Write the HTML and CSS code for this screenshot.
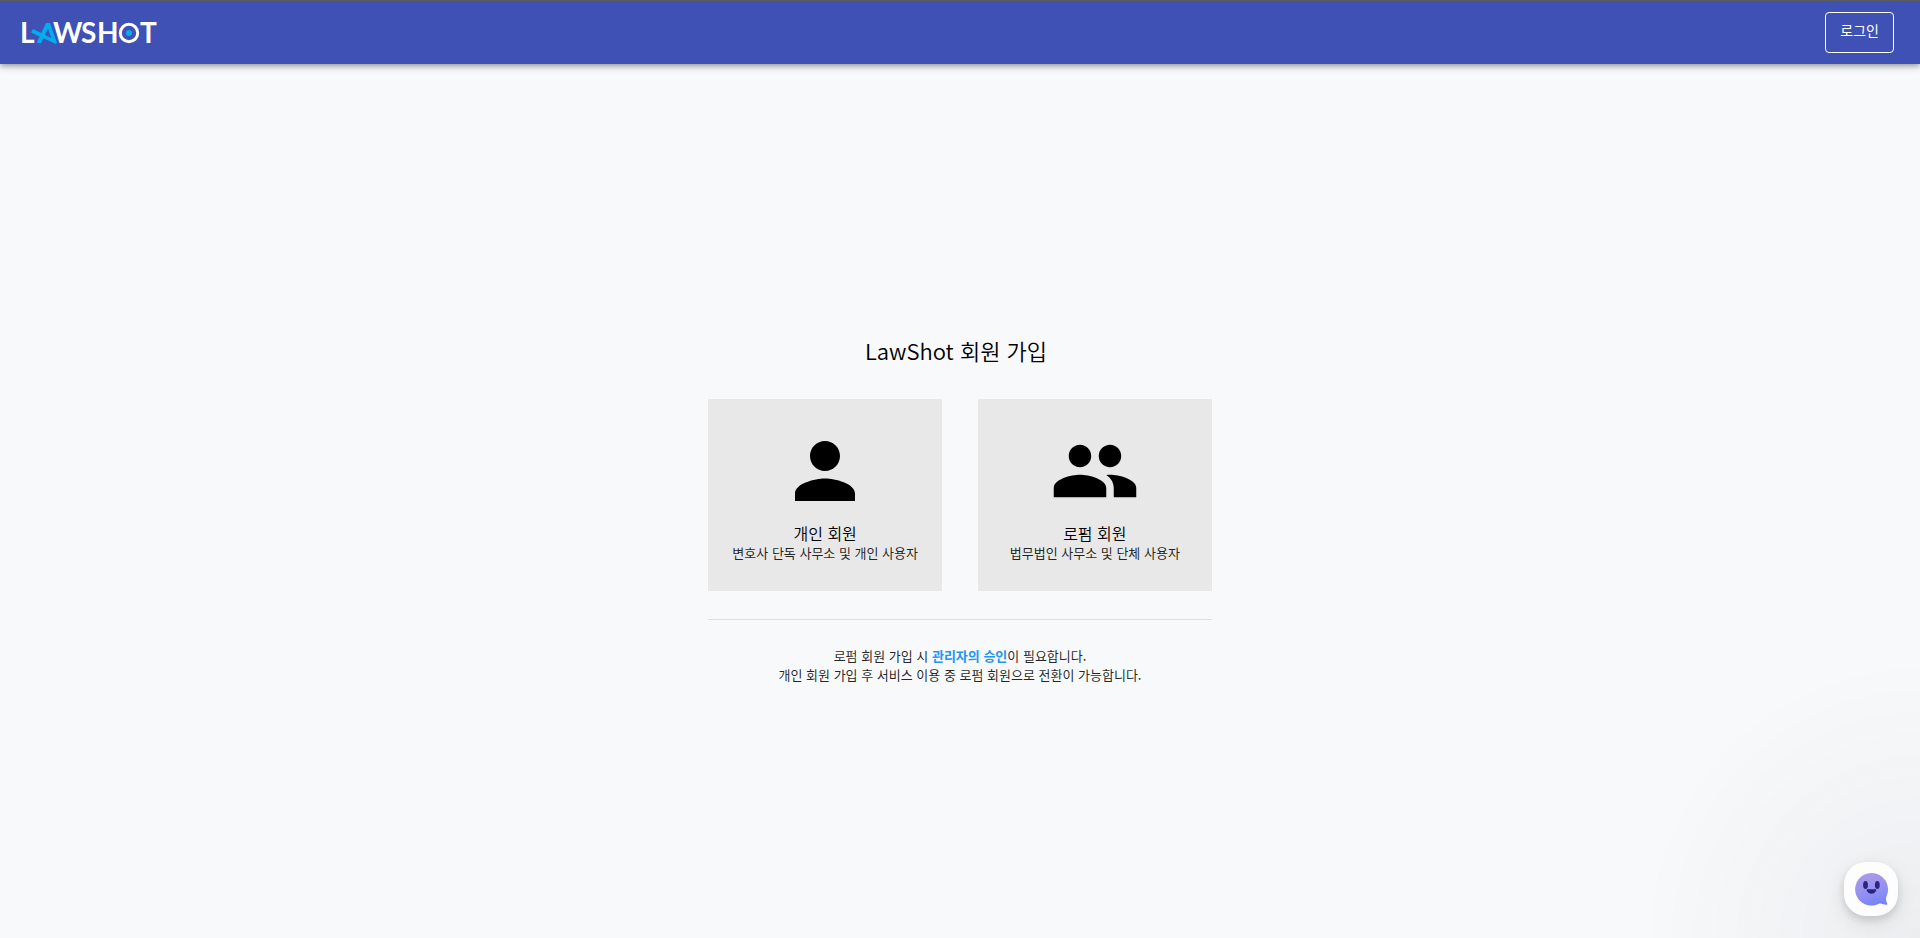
FILE: index.html
```html
<!DOCTYPE html>
<html lang="ko">
<head>
<meta charset="utf-8">
<meta name="viewport" content="width=device-width, initial-scale=1">
<title>LawShot 회원 가입</title>
<link rel="stylesheet" href="styles.css">
</head>
<body>
<header class="app-bar">
  <a class="logo" href="#" aria-label="LawShot">
    <svg class="logo-mark" viewBox="0 0 136 24" role="img" aria-hidden="true">
      <g class="logo-text">
        <text x="-2" y="22">L</text>
        <text x="31" y="22">W</text>
        <text x="59" y="22">S</text>
        <text x="75" y="22">H</text>
        <text x="118" y="22">T</text>
      </g>
      <circle class="logo-ring" cx="107" cy="12" r="8.700"/>
      <g class="logo-accent">
        <path d="M11 8L34 19.500V23L9 11.500Z"/>
        <path d="M24 2H28L35 22H31L26 7.500L19 22H14.500Z"/>
        <circle cx="107" cy="12" r="3"/>
      </g>
    </svg>
  </a>
  <button class="login" type="button">로그인</button>
</header>
<main class="page">
  <section class="signup">
    <h1 class="signup-title">LawShot 회원 가입</h1>
    <div class="choices">
      <button class="choice" type="button">
        <svg class="choice-icon" viewBox="0 0 24 24" aria-hidden="true"><path d="M12 12c2.210 0 4-1.790 4-4s-1.790-4-4-4-4 1.790-4 4 1.790 4 4 4zm0 2c-2.670 0-8 1.340-8 4v2h16v-2c0-2.660-5.330-4-8-4z"/></svg>
        <span class="choice-name">개인 회원</span>
        <span class="choice-note">변호사 단독 사무소 및 개인 사용자</span>
      </button>
      <button class="choice" type="button">
        <svg class="choice-icon" viewBox="0 0 24 24" aria-hidden="true"><path d="M16 11c1.660 0 2.990-1.340 2.990-3S17.660 5 16 5c-1.660 0-3 1.340-3 3s1.340 3 3 3zm-8 0c1.660 0 2.990-1.340 2.990-3S9.660 5 8 5C6.340 5 5 6.340 5 8s1.340 3 3 3zm0 2c-2.330 0-7 1.170-7 3.500V19h14v-2.500c0-2.330-4.670-3.500-7-3.500zm8 0c-.29 0-.62.02-.97.05 1.160.84 1.970 1.970 1.970 3.450V19h6v-2.500c0-2.330-4.670-3.500-7-3.500z"/></svg>
        <span class="choice-name">로펌 회원</span>
        <span class="choice-note">법무법인 사무소 및 단체 사용자</span>
      </button>
    </div>
    <hr class="divider">
    <p class="notice">로펌 회원 가입 시 <strong class="notice-key">관리자의 승인</strong>이 필요합니다.<br>개인 회원 가입 후 서비스 이용 중 로펌 회원으로 전환이 가능합니다.</p>
  </section>
</main>
<div class="chat-glow"></div>
<button class="chat" type="button" aria-label="채팅 상담">
  <svg class="chat-icon" viewBox="0 0 36 36" aria-hidden="true">
    <defs>
      <linearGradient id="bubble" x1="0.300" y1="0" x2="0.600" y2="1">
        <stop offset="0" stop-color="#ab9bea"/>
        <stop offset="0.600" stop-color="#938ff0"/>
        <stop offset="1" stop-color="#7484fa"/>
      </linearGradient>
    </defs>
    <path fill="url(#bubble)" d="M18.500 2a16.300 16.300 0 1 0 7 31c3-1.400 5.300 1.300 8.300.800.8-.2.500-1.200.1-2-1-2.500-1.200-4-.4-6.500A16.300 16.300 0 0 0 18.500 2z"/>
    <ellipse cx="12.500" cy="14" rx="2.400" ry="4" fill="#2b2480"/>
    <ellipse cx="24.300" cy="14" rx="2.400" ry="4" fill="#2b2480"/>
    <path fill="#2b2480" d="M14.700 18.200h7.500c1.200 0 1.300.7.900 1.500-.9 1.900-2.500 3-4.600 3s-3.800-1.100-4.600-3c-.4-.8-.3-1.500.8-1.500z"/>
  </svg>
</button>
</body>
</html>
```
FILE: styles.css
```css
* {
  box-sizing: border-box;
}

body {
  margin: 0;
  min-height: 100vh;
  display: flex;
  flex-direction: column;
  background: #f8f9fb;
  color: rgba(0, 0, 0, 0.87);
  font-family: "Noto Sans CJK KR", sans-serif;
}

button {
  font-family: inherit;
  cursor: pointer;
}

.app-bar {
  display: flex;
  align-items: center;
  justify-content: space-between;
  height: 64px;
  padding: 0 26px 0 22px;
  border-top: 1px solid #5c5c5c;
  background: #3f51b5;
  box-shadow: 0 2px 4px -1px rgba(0, 0, 0, 0.2), 0 4px 5px rgba(0, 0, 0, 0.14), 0 1px 10px rgba(0, 0, 0, 0.12);
}

.logo {
  display: flex;
}

.logo-mark {
  width: 136px;
  height: 24px;
  overflow: visible;
}

.logo-text {
  fill: #fff;
  font-family: Lato, sans-serif;
  font-size: 28px;
  font-weight: 700;
}

.logo-ring {
  fill: none;
  stroke: #fff;
  stroke-width: 3px;
}

.logo-accent {
  fill: #00aeef;
}

.login {
  height: 41px;
  padding: 0 14px 5px;
  border: 1px solid #fff;
  border-radius: 4px;
  background: transparent;
  color: #fff;
  font-size: 14px;
}

.page {
  flex: 1;
  display: flex;
  align-items: center;
  justify-content: center;
  padding-top: 16px;
}

.signup {
  display: flex;
  flex-direction: column;
}

.signup-title {
  margin: 0 0 33px;
  padding-right: 8px;
  font-family: "Noto Sans CJK KR DemiLight", "Noto Sans CJK KR", sans-serif;
  font-size: 22px;
  font-weight: 350;
  line-height: 31px;
  color: #000;
  text-align: center;
}

.choices {
  display: grid;
  grid-template-columns: 1fr 1fr;
  gap: 36px;
}

.choice {
  display: flex;
  flex-direction: column;
  align-items: center;
  padding: 27px 24px 28px;
  border: 0;
  background: #e8e8e8;
  color: #000;
}

.choice-icon {
  width: 90px;
  height: 90px;
  margin-bottom: 7px;
}

.choice-name {
  font-family: "Noto Sans CJK KR DemiLight", "Noto Sans CJK KR", sans-serif;
  font-size: 16px;
  font-weight: 350;
  line-height: 20px;
}

.choice-note {
  color: rgba(0, 0, 0, 0.87);
  font-size: 13px;
  line-height: 20px;
}

.divider {
  width: 100%;
  height: 1px;
  margin: 28px 0 26px;
  border: 0;
  background: #dfe0e2;
}

.notice {
  margin: 0;
  font-size: 13px;
  line-height: 19px;
  text-align: center;
}

.notice-key {
  color: #2196f3;
  font-weight: 700;
}

.chat-glow {
  position: fixed;
  right: 0;
  bottom: 0;
  width: 300px;
  height: 300px;
  background: radial-gradient(circle at 100% 100%, rgba(29, 29, 31, 0.05), rgba(29, 29, 31, 0) 280px);
  pointer-events: none;
}

.chat {
  position: fixed;
  right: 22px;
  bottom: 22px;
  display: flex;
  align-items: center;
  justify-content: center;
  width: 54px;
  height: 54px;
  padding: 0;
  border: 0;
  border-radius: 22px;
  background: #fdfdfd;
  box-shadow: 0 4px 8px rgba(0, 0, 0, 0.12), 0 6px 20px rgba(0, 0, 0, 0.1);
}

.chat-icon {
  width: 36px;
  height: 36px;
}
```
